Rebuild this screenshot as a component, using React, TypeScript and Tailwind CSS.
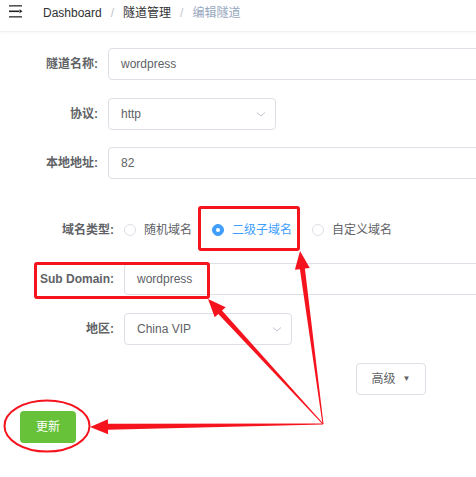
import React from 'react';

type Pt = [number, number];

// Tapered arrow: thin at the start, fat near the head
function arrowPoints(from: Pt, tip: Pt, headLen: number, headW: number, w0: number, w1: number) {
  const dx = tip[0] - from[0];
  const dy = tip[1] - from[1];
  const len = Math.hypot(dx, dy);
  const ux = dx / len;
  const uy = dy / len;
  const nx = -uy;
  const ny = ux;
  const bx = tip[0] - ux * headLen;
  const by = tip[1] - uy * headLen;
  const pts: Pt[] = [
    [from[0] + nx * w0 / 2, from[1] + ny * w0 / 2],
    [bx + nx * w1 / 2, by + ny * w1 / 2],
    [bx + nx * headW / 2, by + ny * headW / 2],
    tip,
    [bx - nx * headW / 2, by - ny * headW / 2],
    [bx - nx * w1 / 2, by - ny * w1 / 2],
    [from[0] - nx * w0 / 2, from[1] - ny * w0 / 2],
  ];
  return pts.map((p) => `${p[0].toFixed(1)},${p[1].toFixed(1)}`).join(' ');
}

const Chevron = () => (
  <svg width="12" height="12" viewBox="0 0 12 12" className="text-[#c0c4cc]">
    <path d="M2 4.5 L6 8 L10 4.5" fill="none" stroke="currentColor" strokeWidth="1" />
  </svg>
);

function Radio({ label, checked }: { label: string; checked?: boolean }) {
  return (
    <div className="flex items-center mr-[20px] shrink-0">
      {checked ? (
        <span className="w-[12px] h-[12px] rounded-full bg-[#409eff] border border-[#409eff] flex items-center justify-center">
          <span className="w-[4px] h-[4px] rounded-full bg-white" />
        </span>
      ) : (
        <span className="w-[12px] h-[12px] rounded-full border border-[#dcdfe6] bg-white" />
      )}
      <span className={`ml-[8px] ${checked ? 'text-[#409eff]' : 'text-[#606266]'}`}>{label}</span>
    </div>
  );
}

export default function App() {
  const origin: Pt = [323, 424];
  const font = { fontFamily: '"Liberation Sans", "Noto Sans CJK SC", sans-serif' };

  return (
    <div className="relative w-[476px] h-[477px] overflow-hidden bg-white text-[12px] text-[#606266]" style={font}>
      {/* top bar */}
      <div className="h-[32px] flex items-start border-b border-[#f2f2f2] shadow-[0_1px_3px_rgba(0,21,41,0.04)]">
        <div className="pl-[9px] pr-[20px] pt-[5px]">
          <svg width="14" height="13" viewBox="0 0 14 13">
            <rect x="0" y="0" width="13" height="1.6" fill="#555" />
            <rect x="0" y="5.5" width="10" height="1.6" fill="#222" />
            <polygon points="10.5,4.3 13.5,6.3 10.5,8.3" fill="#222" />
            <rect x="0" y="11" width="13" height="1.6" fill="#555" />
          </svg>
        </div>
        <div className="flex items-center pt-[4px]">
          <span className="text-[#303133]">Dashboard</span>
          <span className="mx-[9px] text-[#c0c4cc]">/</span>
          <span className="text-[#303133]">隧道管理</span>
          <span className="mx-[9px] text-[#c0c4cc]">/</span>
          <span className="text-[#97a8be]">编辑隧道</span>
        </div>
      </div>

      {/* form */}
      <div className="pt-[16px]">
        <div className="flex items-center h-[32px]">
          <label className="w-[108px] shrink-0 pr-[10px] text-right font-bold">隧道名称:</label>
          <div className="w-[420px] h-[32px] border border-[#dcdfe6] rounded-[4px] px-[12px] flex items-center shrink-0">wordpress</div>
        </div>

        <div className="flex items-center h-[32px] mt-[18px]">
          <label className="w-[108px] shrink-0 pr-[10px] text-right font-bold">协议:</label>
          <div className="w-[168px] h-[32px] border border-[#dcdfe6] rounded-[4px] pl-[12px] pr-[8px] flex items-center justify-between shrink-0">
            <span>http</span>
            <Chevron />
          </div>
        </div>

        <div className="flex items-center h-[32px] mt-[17px]">
          <label className="w-[108px] shrink-0 pr-[10px] text-right font-bold">本地地址:</label>
          <div className="w-[420px] h-[32px] border border-[#dcdfe6] rounded-[4px] px-[12px] flex items-center shrink-0">82</div>
        </div>

        <div className="flex items-center h-[32px] mt-[35px]">
          <label className="w-[124px] shrink-0 pr-[10px] text-right font-bold">域名类型:</label>
          <Radio label="随机域名" />
          <Radio label="二级子域名" checked />
          <Radio label="自定义域名" />
        </div>

        <div className="flex items-center h-[32px] mt-[17px]">
          <label className="w-[124px] shrink-0 pr-[10px] text-right font-bold">Sub Domain:</label>
          <div className="w-[400px] h-[32px] border border-[#dcdfe6] rounded-[4px] px-[12px] flex items-center shrink-0">wordpress</div>
        </div>

        <div className="flex items-center h-[32px] mt-[18px]">
          <label className="w-[124px] shrink-0 pr-[10px] text-right font-bold">地区:</label>
          <div className="w-[168px] h-[32px] border border-[#dcdfe6] rounded-[4px] pl-[12px] pr-[8px] flex items-center justify-between shrink-0">
            <span>China VIP</span>
            <Chevron />
          </div>
        </div>

        <div className="flex mt-[18px] pl-[356px]">
          <button className="w-[70px] h-[32px] border border-[#dcdfe6] rounded-[4px] bg-white flex items-center justify-center text-[#606266]">
            <span>高级</span>
            <span className="ml-[7px] text-[8px]">▼</span>
          </button>
        </div>

        <div className="flex mt-[16px] pl-[20px]">
          <button className="w-[56px] h-[32px] rounded-[4px] bg-[#67c23a] text-white flex items-center justify-center">更新</button>
        </div>
      </div>

      {/* annotations */}
      <div className="absolute left-[198px] top-[206px] w-[102px] h-[45px] border-[3px] border-[#f5141e] rounded-[3px]" />
      <div className="absolute left-[34px] top-[262px] w-[176px] h-[37px] border-[3px] border-[#f5141e] rounded-[3px]" />
      <svg className="absolute left-0 top-0" width="476" height="477" viewBox="0 0 476 477">
        <ellipse cx="47" cy="426" rx="42.5" ry="25.5" fill="none" stroke="#f5141e" strokeWidth="2" />
        <polygon points={arrowPoints(origin, [300, 251], 18, 15, 1, 5)} fill="#f5141e" />
        <polygon points={arrowPoints(origin, [208, 299], 18, 15, 1, 5)} fill="#f5141e" />
        <polygon points={arrowPoints(origin, [90, 427], 18, 15, 1, 6)} fill="#f5141e" />
      </svg>
    </div>
  );
}
